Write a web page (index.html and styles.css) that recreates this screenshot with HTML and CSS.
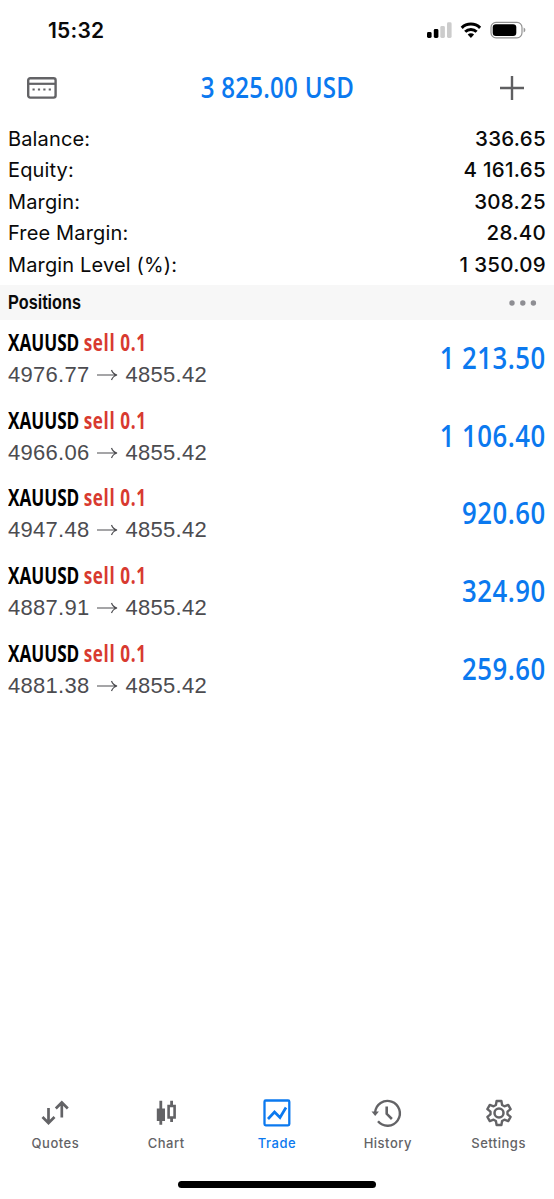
FILE: index.html
```html
<!DOCTYPE html>
<html lang="en">
<head>
<meta charset="utf-8">
<title>Trade</title>
<link rel="stylesheet" href="styles.css">
</head>
<body>
<div class="screen">
  <div class="status">
    <span class="time">15:32</span>
    <svg class="status-icons" width="100" height="20" viewBox="0 0 100 20">
      <rect x="1" y="12" width="4.6" height="6" rx="1.4"/>
      <rect x="7.8" y="9" width="4.6" height="9" rx="1.4"/>
      <rect x="14.3" y="6" width="4.6" height="12" rx="1.4" fill="#ccc"/>
      <rect x="21" y="2.3" width="4.6" height="15.7" rx="1.4" fill="#ccc"/>
      <g fill="none" stroke="#000" stroke-width="3">
        <path d="M35.7 7.8a13.2 13.2 0 0 1 18.4 0"/>
        <path d="M39.2 11.8a8.1 8.1 0 0 1 11.4 0"/>
      </g>
      <path d="M44.9 18l-3.2-3.4a4.6 4.6 0 0 1 6.4 0z"/>
      <rect x="65" y="2.4" width="31" height="15.4" rx="5" fill="none" stroke="#929292" stroke-width="1.2"/>
      <rect x="66.7" y="4.2" width="23.6" height="11.8" rx="3.2"/>
      <path d="M97.6 7.6q1.8.8 1.8 2.5t-1.8 2.5z" fill="#999"/>
    </svg>
  </div>
  <header class="header">
    <svg class="ico" width="30" height="22" viewBox="0 0 30 22">
      <rect x="1.2" y="1.2" width="27.4" height="19.4" rx="2" fill="none" stroke="#636366" stroke-width="2.4"/>
      <path d="M1 6.8h28" stroke="#636366" stroke-width="2.2"/>
      <path d="M5.5 12.5h19" stroke="#636366" stroke-width="2.2" stroke-dasharray="2.2 3.2"/>
    </svg>
    <h1 class="total">3 825.00 USD</h1>
    <svg class="ico" width="24" height="24" viewBox="0 0 24 24"><path d="M12 0v24M0 12h24" stroke="#5f5f61" stroke-width="2.4"/></svg>
  </header>
  <dl class="summary">
    <div><dt>Balance:</dt><dd>336.65</dd></div>
    <div><dt>Equity:</dt><dd>4 161.65</dd></div>
    <div><dt>Margin:</dt><dd>308.25</dd></div>
    <div><dt>Free Margin:</dt><dd>28.40</dd></div>
    <div><dt>Margin Level (%):</dt><dd>1 350.09</dd></div>
  </dl>
  <div class="section"><span class="section-title">Positions</span>
    <svg width="28" height="6" viewBox="0 0 28 6" fill="#8e8e93"><circle cx="3" cy="3" r="2.7"/><circle cx="13.8" cy="3" r="2.7"/><circle cx="24.4" cy="3" r="2.7"/></svg>
  </div>
  <ul class="positions">
    <li><div><p class="sym">XAUUSD <b>sell 0.1</b></p><p class="px">4976.77 <svg class="arrow" viewBox="0 0 21 12"><path d="M0 6h20M14.5 1q1.5 4 5.5 5q-4 1-5.5 5"/></svg> 4855.42</p></div><strong class="profit">1 213.50</strong></li>
    <li><div><p class="sym">XAUUSD <b>sell 0.1</b></p><p class="px">4966.06 <svg class="arrow" viewBox="0 0 21 12"><path d="M0 6h20M14.5 1q1.5 4 5.5 5q-4 1-5.5 5"/></svg> 4855.42</p></div><strong class="profit">1 106.40</strong></li>
    <li><div><p class="sym">XAUUSD <b>sell 0.1</b></p><p class="px">4947.48 <svg class="arrow" viewBox="0 0 21 12"><path d="M0 6h20M14.5 1q1.5 4 5.5 5q-4 1-5.5 5"/></svg> 4855.42</p></div><strong class="profit">920.60</strong></li>
    <li><div><p class="sym">XAUUSD <b>sell 0.1</b></p><p class="px">4887.91 <svg class="arrow" viewBox="0 0 21 12"><path d="M0 6h20M14.5 1q1.5 4 5.5 5q-4 1-5.5 5"/></svg> 4855.42</p></div><strong class="profit">324.90</strong></li>
    <li><div><p class="sym">XAUUSD <b>sell 0.1</b></p><p class="px">4881.38 <svg class="arrow" viewBox="0 0 21 12"><path d="M0 6h20M14.5 1q1.5 4 5.5 5q-4 1-5.5 5"/></svg> 4855.42</p></div><strong class="profit">259.60</strong></li>
  </ul>
  <nav class="tabs">
    <a class="tab"><svg viewBox="0 0 28 28"><path d="M7.5 9v14M1.5 18l6 6 6-6M20.8 18.5V4M14.8 9.5l6-6 6 6" stroke-width="2.7"/></svg><span>Quotes</span></a>
    <a class="tab"><svg viewBox="0 0 28 28"><path d="M8.8 1.8v24M19.6 1.8v5M19.6 18v5" stroke-width="2.8"/><path d="M4.8 9.5h8.2v12.5H4.8z" fill="currentColor" stroke="none"/><path d="M16.6 7h6v11.5h-6z" stroke-width="2.6"/></svg><span>Chart</span></a>
    <a class="tab active"><svg viewBox="0 0 28 28"><rect x="1.500" y="1.5" width="24.8" height="24.8" rx="1.2" stroke-width="2.3"/><path d="M5 20l6.5-7 5.500 5.500L23 8.500" stroke-width="2.7"/></svg><span>Trade</span></a>
    <a class="tab history"><svg viewBox="0 0 28 28"><path d="M3.1 13.5A12.4 12.4 0 1 1 6 22.3" stroke-width="2.4"/><path d="M-.5 12.5h7.4l-3.7 4.5z" fill="currentColor" stroke="none"/><path d="M14.7 7.5v7.3l5.2 5.2" stroke-width="2.6"/></svg><span>History</span></a>
    <a class="tab"><svg viewBox="0 0 28 28"><path d="M11.6 2h4.8l.7 4 2.300 1.300 3.800-1.400 2.400 4.200-3.100 2.600v2.600l3.100 2.600-2.400 4.200-3.800-1.400-2.300 1.300-.7 4h-4.800l-.7-4-2.300-1.300-3.800 1.400-2.400-4.200 3.100-2.600v-2.600l-3.100-2.600 2.400-4.200 3.800 1.400 2.300-1.300z" stroke-width="2.4" stroke-linejoin="round"/><circle cx="14" cy="14" r="4.5" stroke-width="2.5"/></svg><span>Settings</span></a>
  </nav>
  <div class="home"></div>
</div>
</body>
</html>
```
FILE: styles.css
```css
* { box-sizing: border-box; margin: 0; padding: 0; }
body { background: #fff; color: #0a0a0a; font-family: Inter, "Liberation Sans", sans-serif; }
.screen { width: 554px; height: 1199px; display: flex; flex-direction: column; background: #fff; overflow: hidden; }
.status { height: 58px; padding: 20px 28px 0 48px; display: flex; justify-content: space-between; align-items: flex-start; }
.time { font-size: 21px; font-weight: 600; line-height: 22px; letter-spacing: .2px; }
.header { height: 66px; padding: 0 30px 6px 27px; display: flex; justify-content: space-between; align-items: center; }
.total, .sym, .profit { font-family: "Open Sans", "Noto Sans", sans-serif; font-weight: 700; white-space: pre; }
.total { color: #0b79ef; font-size: 29px; line-height: 36px; padding-bottom: 2px; margin-right: 2px; font-weight: 650; letter-spacing: .3px; transform: scaleX(.83); }
.summary { height: 161px; padding: 0 8px; }
.summary div { display: flex; justify-content: space-between; height: 31.4px; line-height: 31.4px; font-size: 20px; }
.summary dt { letter-spacing: .15px; }
.summary dd { font-weight: 450; font-size: 20.5px; line-height: 30px; letter-spacing: .3px; }
.section { height: 35px; background: #f7f7f7; padding: 0 17px 0 8px; display: flex; justify-content: space-between; align-items: center; }
.section-title { font: 700 20.5px/32px "Liberation Sans", sans-serif; padding-bottom: 1px; transform: scaleX(.79); transform-origin: left; }
.positions { list-style: none; flex: 1; }
.positions li { height: 77.6px; padding: 0 8px; display: flex; justify-content: space-between; align-items: center; }
.sym { font-size: 23px; line-height: 32px; transform: scaleX(.745); transform-origin: left; color: #000; }
.sym b { color: #d83a30; font-weight: 680; letter-spacing: .8px; }
.px { display: flex; align-items: center; gap: 7.5px; font: 22px/32px "Liberation Sans", sans-serif; letter-spacing: .28px; padding-top: 1px; color: #4c4c50; }
.arrow { width: 21px; height: 12px; fill: none; stroke: currentColor; stroke-width: 1.2; }
.profit { font-size: 31px; font-weight: 650; line-height: 38px; padding-bottom: 3px; letter-spacing: .6px; color: #0b79ef; transform: scaleX(.83); transform-origin: right; }
.tabs { height: 82px; display: grid; grid-template-columns: repeat(5, 1fr); }
.tab { display: flex; flex-direction: column; align-items: center; color: #636366; font-size: 13px; font-weight: 500; letter-spacing: .5px; }
.tab svg { width: 28px; height: 28px; fill: none; stroke: currentColor; overflow: visible; }
.history svg { margin-right: 4px; }
.tab span { line-height: 18px; margin-top: 7px; }
.tab.active { color: #0b79ef; }
.home { width: 198px; height: 7px; margin: 0 auto 11px; border-radius: 4px; background: #000; }
```
